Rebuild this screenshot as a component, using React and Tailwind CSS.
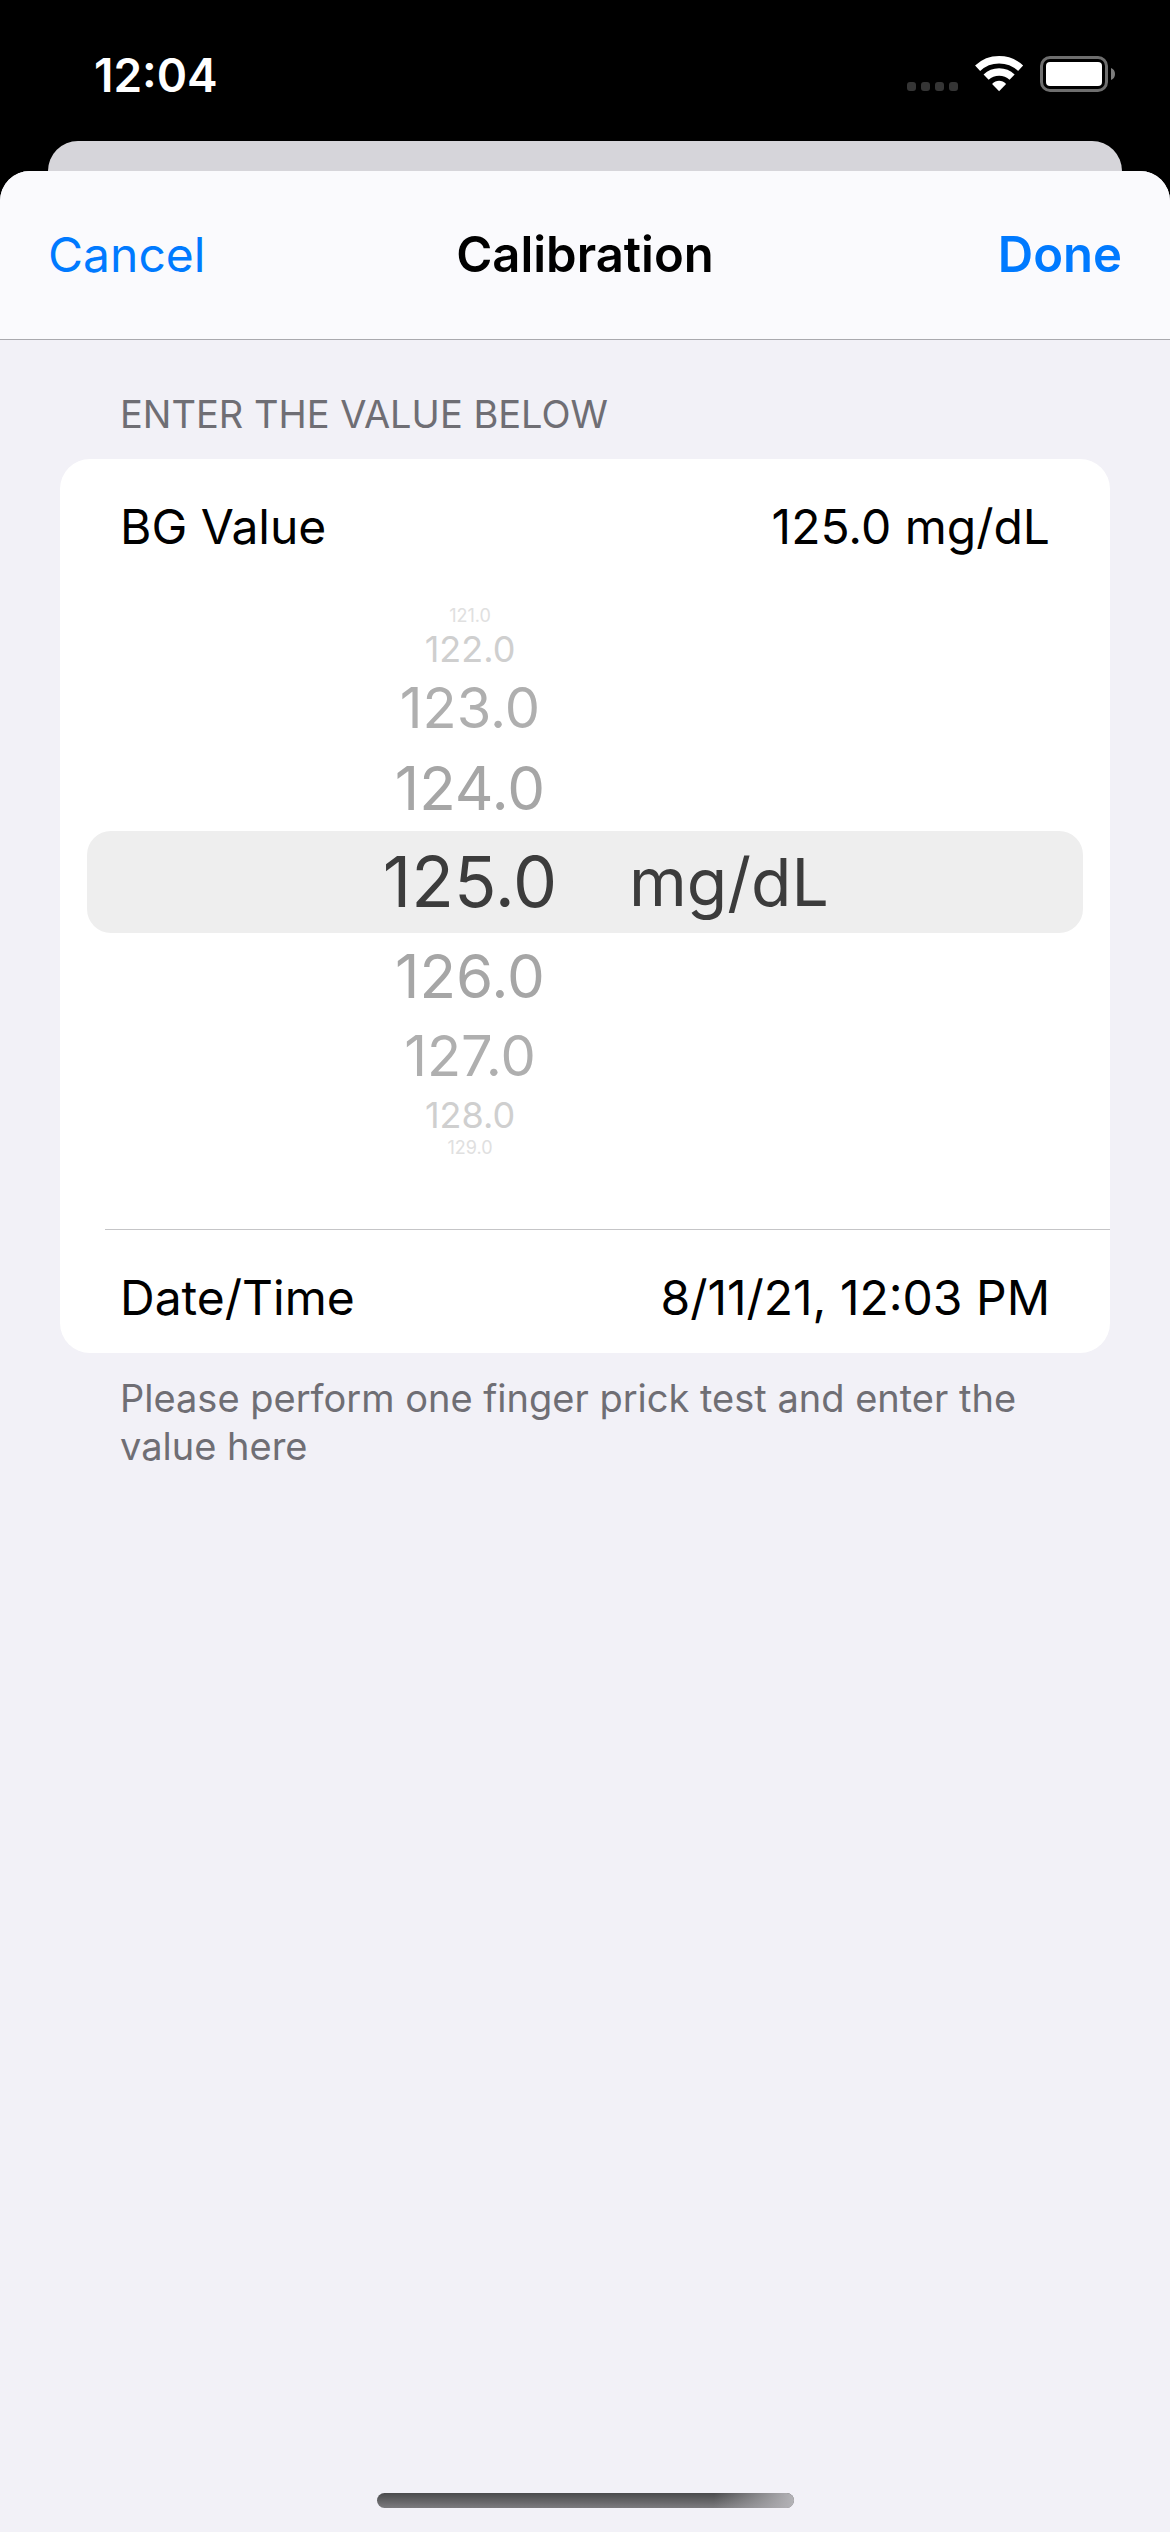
import { useState } from "react";

const FAR_ROWS = [
  { offset: 4, style: "h-[22px] text-[18px] text-[#e0e0e0]" },
  { offset: 3, style: "h-[44px] text-[36px] text-[#cfcfcf]" },
  { offset: 2, style: "h-[74px] text-[56px] text-[#afafaf]" },
  { offset: 1, style: "h-[86px] text-[60px] text-[#a6a6a6]" },
];

function StatusBar() {
  return (
    <div className="flex h-[141px] items-start justify-between pl-[94px] pr-[54px] pt-[51px] text-white">
      <time className="text-[46px] font-semibold leading-[48px]">12:04</time>
      <svg className="mt-1 h-[37px] w-[209px]" viewBox="0 0 209 37" aria-hidden="true">
        {[0, 14, 28, 42].map((x) => (
          <rect key={x} x={x} y="27" width="9" height="9" rx="3" fill="#353535" />
        ))}
        <g fill="none" stroke="#fff" strokeWidth="7.4">
          <path d="M70.6 13.2a31.5 31.5 0 0 1 43 0" />
          <path d="M79.1 22.2a18.8 18.8 0 0 1 26 0" />
        </g>
        <path d="M92.1 36.2l-7-7.2c4-4.2 10-4.2 14 0z" fill="#fff" />
        <rect x="134.500" y="2.500" width="65" height="33" rx="8.500" fill="none" stroke="#6e6e6e" strokeWidth="3" />
        <rect x="139" y="7" width="56" height="24" rx="4" fill="#fff" />
        <path d="M204 13q4 1.500 4 6t-4 6z" fill="#7d7d7d" />
      </svg>
    </div>
  );
}

function WheelRow({ value, style, onPick }) {
  return (
    <div className="grid grid-cols-2">
      <button
        type="button"
        onClick={() => onPick(value)}
        className={`flex w-[230px] items-center justify-center justify-self-end leading-none ${style}`}
      >
        {value.toFixed(1)}
      </button>
    </div>
  );
}

function Wheel({ value, onPick }) {
  return (
    <div className="pb-[70px] pt-[10px]" role="group" aria-label="BG Value picker">
      {FAR_ROWS.map((row) => (
        <WheelRow key={row.offset} value={value - row.offset} style={row.style} onPick={onPick} />
      ))}
      <div className="mx-[27px] grid h-[102px] grid-cols-2 items-center rounded-[24px] bg-[#eeeeee] leading-none text-[#3c3c3c]">
        <output className="w-[230px] justify-self-end text-center text-[70px]">{value.toFixed(1)}</output>
        <span className="pl-11 text-[66px]">mg/dL</span>
      </div>
      {[...FAR_ROWS].reverse().map((row) => (
        <WheelRow key={row.offset} value={value + row.offset} style={row.style} onPick={onPick} />
      ))}
    </div>
  );
}

export default function App() {
  const [value, setValue] = useState(125);

  return (
    <div className="flex min-h-screen flex-col bg-black font-['Inter',sans-serif] text-[48px] leading-[60px] text-black">
      <StatusBar />
      <div className="mx-12 h-[30px] rounded-t-[30px] bg-[#d6d5da]" />
      <main className="flex flex-1 flex-col overflow-hidden rounded-t-[30px] bg-[#f2f1f7]">
        <header className="grid h-[169px] grid-cols-[1fr_auto_1fr] items-center border-b border-[#a9a9ae] bg-[#fafafd] px-12">
          <button type="button" className="justify-self-start text-[#007aff]">
            Cancel
          </button>
          <h1 className="text-[49px] font-semibold">Calibration</h1>
          <button type="button" className="justify-self-end text-[49px] font-semibold text-[#007aff]">
            Done
          </button>
        </header>

        <section className="px-[60px] pt-[50px]">
          <h2 className="px-[60px] text-[38px] leading-[48px] text-[#6f6e74]">ENTER THE VALUE BELOW</h2>
          <div className="mt-[21px] overflow-hidden rounded-[30px] bg-white">
            <button type="button" className="flex h-[136px] w-full items-center justify-between px-[60px]">
              <span>BG Value</span>
              <span>{value.toFixed(1)} mg/dL</span>
            </button>
            <Wheel value={value} onPick={setValue} />
            <div className="ml-[45px] border-t border-[#c5c5c7]">
              <button type="button" className="flex h-[123px] w-full items-center justify-between pl-[15px] pr-[60px] pt-3">
                <span>Date/Time</span>
                <span>8/11/21, 12:03 PM</span>
              </button>
            </div>
          </div>
          <p className="mt-[21px] px-[60px] text-[38px] leading-[48px] text-[#6f6e74]">
            Please perform one finger prick test and enter the value here
          </p>
        </section>

        <div className="mx-auto mb-6 mt-auto h-[15px] w-[417px] rounded-full bg-linear-to-b from-[#4b4b4d] to-[#7c7b7e]">
          <div className="ml-auto h-full w-20 rounded-r-full bg-linear-to-r from-transparent to-[#b4b3b7]" />
        </div>
      </main>
    </div>
  );
}
